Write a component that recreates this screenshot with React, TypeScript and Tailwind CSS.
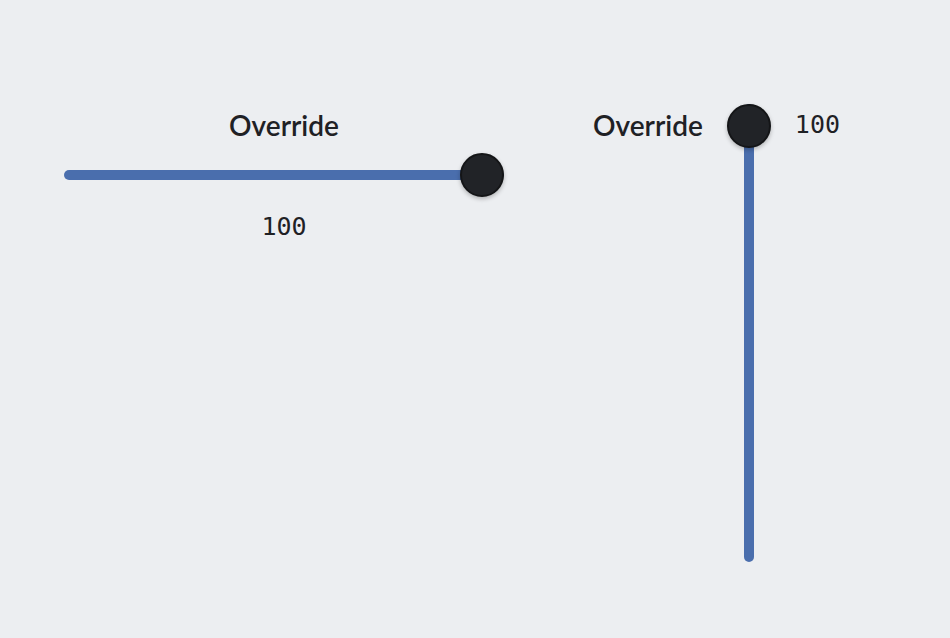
import React from "react";

export default function App() {
  return (
    <div className="w-[950px] h-[638px] bg-[#eceef1] flex items-start pt-[104px] pl-[64px] text-[#1f2125]" style={{ fontFamily: "Lato, 'Noto Sans', sans-serif" }}>
      <div className="w-[440px] flex flex-col items-center mt-[5px]">
        <div className="h-[32px] leading-[32px] text-[28px] font-semibold">Override</div>
        <div className="relative w-full h-[44px] mt-[12px]">
          <div className="absolute left-0 right-0 top-1/2 -translate-y-1/2 h-[10px] rounded-full bg-[#4a6ead]" />
          <div className="absolute right-0 top-0 w-[44px] h-[44px] rounded-full bg-[#212327] border-2 border-[#141517] shadow-[0_2px_4px_rgba(0,0,0,0.25)]" />
        </div>
        <div className="mt-[14px] h-[32px] leading-[32px] text-[25px]" style={{ fontFamily: "'DejaVu Sans Mono', monospace" }}>100</div>
      </div>
      <div className="flex items-start ml-[89px]">
        <div className="h-[44px] flex items-center text-[28px] font-semibold -mt-[1px]">Override</div>
        <div className="relative w-[44px] h-[458px] ml-[24px]">
          <div className="absolute top-0 bottom-0 left-1/2 -translate-x-1/2 w-[10px] rounded-full bg-[#4a6ead]" />
          <div className="absolute left-0 top-0 w-[44px] h-[44px] rounded-full bg-[#212327] border-2 border-[#141517] shadow-[0_2px_4px_rgba(0,0,0,0.25)]" />
        </div>
        <div className="ml-[24px] h-[44px] flex items-center text-[25px] -mt-[1px]" style={{ fontFamily: "'DejaVu Sans Mono', monospace" }}>100</div>
      </div>
    </div>
  );
}
